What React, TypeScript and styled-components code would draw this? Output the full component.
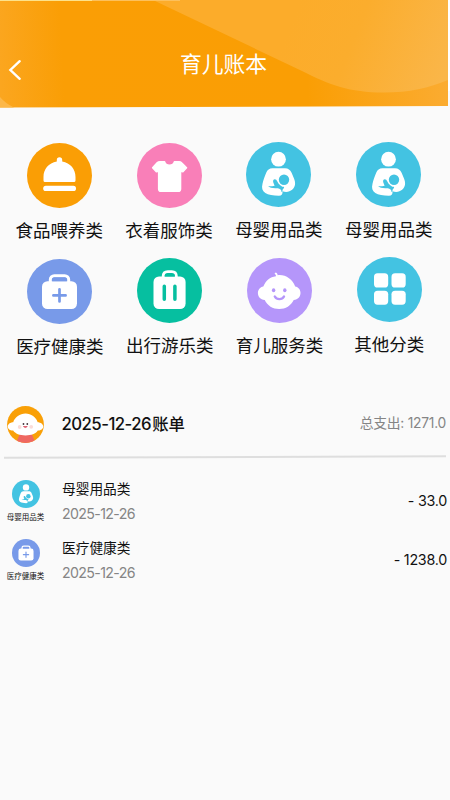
import React from "react";
import styled, { createGlobalStyle } from "styled-components";

const GlobalStyle = createGlobalStyle`
  * { box-sizing: border-box; }
  body { margin: 0; background: #fafafa; }
`;

const Page = styled.main`
  width: 450px;
  height: 800px;
  overflow: hidden;
  background: #fafafa;
  color: #111;
  font-family: Inter, "Noto Sans CJK SC", sans-serif;
`;

const Header = styled.header`
  position: relative;
  height: 108px;
  display: grid;
  grid-template-columns: 32px 1fr 35px;
`;

const Backdrop = styled.svg`
  position: absolute;
  inset: 0;
`;

const BackButton = styled.button`
  position: relative;
  align-self: start;
  margin-top: 59px;
  padding: 0 0 0 8px;
  border: 0;
  background: none;
  height: 22px;
  display: flex;
`;

const Title = styled.h1`
  position: relative;
  margin: 47px 0 0;
  text-align: center;
  color: #fff;
  font: 400 21.8px/32px "Noto Sans CJK SC", sans-serif;
`;

const Categories = styled.nav`
  display: flex;
  padding-left: 4.4px;
`;

const Column = styled.div<{ $top: number }>`
  flex: 0 0 109.8px;
  padding-top: ${(p) => p.$top}px;
`;

const Category = styled.a<{ $shift: number }>`
  display: flex;
  flex-direction: column;
  align-items: center;
  height: 115.5px;
  margin-left: ${(p) => p.$shift}px;
  margin-right: ${(p) => -p.$shift}px;
`;

const CategoryLabel = styled.span`
  margin-top: 10px;
  font-size: 17.5px;
  line-height: 26px;
  white-space: nowrap;
`;

const Bill = styled.section`
  display: flex;
  align-items: center;
  height: 56px;
  margin-top: 22px;
  padding: 0 4px 0 7px;
`;

const BillTitle = styled.h2`
  flex: 1;
  margin: -1px 0 0 17.5px;
  font-size: 16.8px;
  line-height: 24px;
  font-weight: 450;
  letter-spacing: -0.55px;
  span { font-size: 16.4px; letter-spacing: 0; font-weight: 500; margin-left: 1px; }
`;

const Total = styled.span`
  margin-top: -4px;
  color: #858585;
  font-size: 13.8px;
  letter-spacing: -0.25px;
`;

const Divider = styled.hr`
  width: 442px;
  height: 1.5px;
  margin: 4px 0 0 4px;
  border: 0;
  background: #dedede;
  transform: rotate(-0.2deg);
`;

const Entries = styled.div`
  padding-top: 11.5px;
`;

const Entry = styled.article`
  display: flex;
  height: 59.3px;
  padding: 0 3px 0 6px;
`;

const EntryIcon = styled.div`
  width: 39px;
  display: flex;
  flex-direction: column;
  align-items: center;
  padding-top: 10.5px;
  span { font-size: 7.5px; line-height: 12px; margin-top: 4.5px; white-space: nowrap; font-weight: 400; }
`;

const EntryText = styled.div`
  flex: 1;
  margin-left: 17px;
  padding-top: 10px;
`;

const EntryName = styled.div`
  font-size: 13.7px;
  line-height: 21px;
`;

const EntryDate = styled.time`
  display: block;
  margin-top: 3px;
  color: #858585;
  font-size: 14.2px;
  line-height: 22px;
  letter-spacing: -0.65px;
`;

const Amount = styled.span`
  margin-top: 20.5px;
  font-size: 14.3px;
  line-height: 22px;
  letter-spacing: -0.25px;
`;

type IconName = "food" | "shirt" | "mother" | "medical" | "luggage" | "baby" | "grid";

const colors: Record<IconName, string> = {
  food: "#fa9e05",
  shirt: "#f97fb8",
  mother: "#43c3e2",
  medical: "#789ae9",
  luggage: "#06bfa0",
  baby: "#b596fa",
  grid: "#43c3e2",
};

function Glyph({ name }: { name: IconName }) {
  const c = colors[name];
  switch (name) {
    case "food":
      return (
        <g fill="#fff">
          <path d="M29.8 18.6V17a2.7 2.7 0 0 1 5.4 0v1.6C43.4 20.1 48.5 26.2 48.5 34v3.500a1.500 1.500 0 0 1-1.500 1.500H18a1.500 1.500 0 0 1-1.500-1.500V34c0-7.800 5.100-13.900 13.300-15.400Z" />
          <rect x="16.2" y="42.8" width="32.8" height="5.2" rx="2.6" />
        </g>
      );
    case "shirt":
      return (
        <path
          fill="#fff"
          stroke="#fff"
          strokeWidth="1.4"
          strokeLinejoin="round"
          d="M23 18.700h4.600c1.100 4.700 8.700 4.700 9.800 0H42q1.600 0 2.600 1.100l5 5-3.700 4-2.300-.8V46q0 2.400-2.400 2.400H24q-2.400 0-2.400-2.400V28l-2.300.8-3.700-4 4.500-5q1.100-1.100 2.900-1.100Z"
        />
      );
    case "mother":
      return (
        <>
          <circle cx="32.5" cy="17.2" r="7.4" fill="#fff" />
          <path fill="#fff" d="M26.500 26.200h12.500c3.200 0 5.200 1.500 6.600 4.600l2.400 5.700c1.900 4.700 1.300 8.400-1.600 11-3 2.700-6.600 3-10 1.700.6 2.700-.7 4.600-3.500 4.600-5.700 0-10.700-.9-13.600-2.700-3-2-3.900-5-2.800-9.300.8-3.400 2.200-7.500 3.700-11 1.200-3 3.100-4.600 6.300-4.600Z" />
          <circle cx="38" cy="37.800" r="5.200" fill={c} />
          <path fill={c} d="M33 42c-1.300-1.200-2.100-4.700-4.100-4.700-1.700 0-2.100 1.500-1.600 3.200l1.300 3.300c-2.100.5-4.300.6-6.500.5 1.300 1.300 3.900 1.900 7.200 1.900 2.900-.1 5.100.3 6.100 2.200l2.800-3c-2.400-.6-3.900-2-5.200-3.400Z" />
          <path d="M35.800 49.600c-.4-1.500.1-3 1.900-4.600" stroke={c} strokeWidth="1.300" fill="none" />
        </>
      );
    case "medical":
      return (
        <>
          <rect x="23.300" y="16.700" width="18.400" height="12" rx="4" fill="none" stroke="#fff" strokeWidth="3" />
          <rect x="15" y="22.200" width="35" height="27.800" rx="5.500" fill="#fff" />
          <path d="M25.300 22.200v-1.800q0-1.800 1.800-1.800h10.800q1.800 0 1.800 1.800v1.800Z" fill={c} />
          <path d="M32.500 30.300v12.200M26.400 36.400h12.200" stroke={c} strokeWidth="2.700" strokeLinecap="round" />
        </>
      );
    case "luggage":
      return (
        <>
          <path d="M26.200 23v-4.800q0-4.600 4.600-4.600h3.900q4.600 0 4.600 4.600V23" fill="none" stroke="#fff" strokeWidth="2.900" />
          <rect x="16.500" y="18.400" width="32.100" height="32.600" rx="5.500" fill="#fff" />
          <path d="M27.700 18.400v-.6q0-2 2-2h6.100q2 0 2 2v.6Z" fill={c} />
          <path d="M27.300 28.200v13M37.900 28.200v13" stroke={c} strokeWidth="3.500" strokeLinecap="round" />
        </>
      );
    case "baby":
      return (
        <>
          <path fill="#fff" d="M28.900 18.200c.2-1-.2-1.800-1.400-2.500l1.100-1.100c1 .1 1.800 1.200 2.100 2.600 7.600-.9 14.800 3.900 17.500 11.400 3.200.5 5.300 3.200 5.300 6.500s-2.500 6.900-6.800 6.900C44 47.700 38.600 51 32.200 51s-11.800-3.300-14.500-9c-4.400-.3-6.800-3.400-6.800-6.900 0-3.200 2.200-6 5.400-6.500 2-5.500 6.800-9.800 12.600-10.400Z" />
          <ellipse cx="26.6" cy="32.3" rx="1.7" ry="2" fill={c} />
          <ellipse cx="37.8" cy="32.3" rx="1.7" ry="2" fill={c} />
          <path d="M27.800 38.500c2 3.500 7.200 3.500 9.200 0" fill="none" stroke={c} strokeWidth="2.4" strokeLinecap="round" />
        </>
      );
    case "grid":
      return (
        <g fill="#fff">
          <rect x="17" y="16.3" width="14.2" height="14.2" rx="3.6" />
          <rect x="34.5" y="16.3" width="14.2" height="14.2" rx="3.6" />
          <rect x="17" y="33.7" width="14.2" height="14" rx="3.6" />
          <rect x="34.5" y="33.7" width="14.2" height="14" rx="3.6" />
        </g>
      );
  }
}

function CategoryIcon({ name, size = 65 }: { name: IconName; size?: number }) {
  return (
    <svg width={size} height={size} viewBox="0 0 65 65">
      <circle cx="32.5" cy="32.5" r="32.5" fill={colors[name]} />
      <Glyph name={name} />
    </svg>
  );
}

function Avatar() {
  return (
    <svg width="37" height="37" viewBox="0 0 37 37">
      <clipPath id="avatar"><circle cx="18.5" cy="18.5" r="18.4" /></clipPath>
      <g clipPath="url(#avatar)">
        <rect width="37" height="37" fill="#f9a007" />
        <path d="M9 37l4-9.500h11.500L28.500 37Z" fill="#ef6861" />
        <path d="M18.500 7.600c5.600 0 10.600 3.500 12.200 8.700 3 .1 5.600 2 5.600 4.200 0 2.500-2.800 4.200-5.500 4-2.100 3.300-6.500 4.900-12.300 4.900S8.200 27.700 6.200 24.500C3.500 24.700.7 23.100.7 20.500c0-2.200 2.400-4.100 5.500-4.200C7.900 11.100 12.900 7.600 18.500 7.600Z" fill="#fff" />
        <circle cx="12.7" cy="21" r="1.9" fill="#f9dcd9" />
        <circle cx="24.2" cy="20.8" r="1.9" fill="#f9dcd9" />
        <circle cx="16.5" cy="18" r=".9" fill="#44343c" />
        <circle cx="20.3" cy="18" r=".9" fill="#44343c" />
        <path d="M16.400 20.500q2 2.200 3.900 0Z" fill="#d94256" stroke="#d94256" strokeWidth=".6" />
      </g>
    </svg>
  );
}

function HeaderBackdrop() {
  return (
    <Backdrop width="450" height="108" viewBox="0 0 450 108">
      <defs>
        <linearGradient id="base" x1="0" y1="70" x2="450" y2="50" gradientUnits="userSpaceOnUse">
          <stop offset="0" stopColor="#fba61f" />
          <stop offset=".14" stopColor="#fa9e05" />
          <stop offset=".68" stopColor="#fa9e04" />
          <stop offset="1" stopColor="#fbac32" />
        </linearGradient>
        <linearGradient id="wave" x1="300" y1="0" x2="450" y2="60" gradientUnits="userSpaceOnUse">
          <stop offset="0" stopColor="#fcac2a" />
          <stop offset=".4" stopColor="#fbad2d" />
          <stop offset="1" stopColor="#fab649" />
        </linearGradient>
      </defs>
      <path d="M448 0h2v91h-2Z" fill="#fff" />
      <path d="M0 0h448v106L0 107.500Z" fill="url(#base)" />
      <path d="M153 0l149 71c28 14 47 21.500 82 21.500 25 0 45-4.500 64-12.500V0Z" fill="url(#wave)" />
      <path d="M0 97q6 7 14 10.400L0 107.500Z" fill="#fcb748" />
      <path d="M0 0h92v1H0Z" fill="#fde28a" />
      <path d="M92 0h88v1H92Z" fill="#fcc05c" />
    </Backdrop>
  );
}

const columns: { top: number; items: { icon: IconName; label: string }[] }[] = [
  { top: 35, items: [{ icon: "food", label: "食品喂养类" }, { icon: "medical", label: "医疗健康类" }] },
  { top: 34.5, items: [{ icon: "shirt", label: "衣着服饰类" }, { icon: "luggage", label: "出行游乐类" }] },
  { top: 34, items: [{ icon: "mother", label: "母婴用品类" }, { icon: "baby", label: "育儿服务类" }] },
  { top: 33.5, items: [{ icon: "mother", label: "母婴用品类" }, { icon: "grid", label: "其他分类" }] },
];

const entries: { icon: IconName; label: string; date: string; amount: string }[] = [
  { icon: "mother", label: "母婴用品类", date: "2025-12-26", amount: "- 33.0" },
  { icon: "medical", label: "医疗健康类", date: "2025-12-26", amount: "- 1238.0" },
];

export default function App() {
  return (
    <Page>
      <GlobalStyle />
      <Header>
        <HeaderBackdrop />
        <BackButton aria-label="返回">
          <svg width="15" height="22" viewBox="0 0 15 22">
            <path d="M11.700 2.200L2.400 11l9.300 8.800" fill="none" stroke="#fff" strokeWidth="2.400" strokeLinecap="round" />
          </svg>
        </BackButton>
        <Title>育儿账本</Title>
      </Header>
      <Categories>
        {columns.map((column, i) => (
          <Column key={i} $top={column.top}>
            {column.items.map((item, row) => (
              <Category key={item.label} $shift={row * 0.6}>
                <CategoryIcon name={item.icon} />
                <CategoryLabel>{item.label}</CategoryLabel>
              </Category>
            ))}
          </Column>
        ))}
      </Categories>
      <Bill>
        <Avatar />
        <BillTitle>2025-12-26<span>账单</span></BillTitle>
        <Total>总支出: 1271.0</Total>
      </Bill>
      <Divider />
      <Entries>
        {entries.map((entry) => (
          <Entry key={entry.label}>
            <EntryIcon>
              <CategoryIcon name={entry.icon} size={28} />
              <span>{entry.label}</span>
            </EntryIcon>
            <EntryText>
              <EntryName>{entry.label}</EntryName>
              <EntryDate>{entry.date}</EntryDate>
            </EntryText>
            <Amount>{entry.amount}</Amount>
          </Entry>
        ))}
      </Entries>
    </Page>
  );
}
